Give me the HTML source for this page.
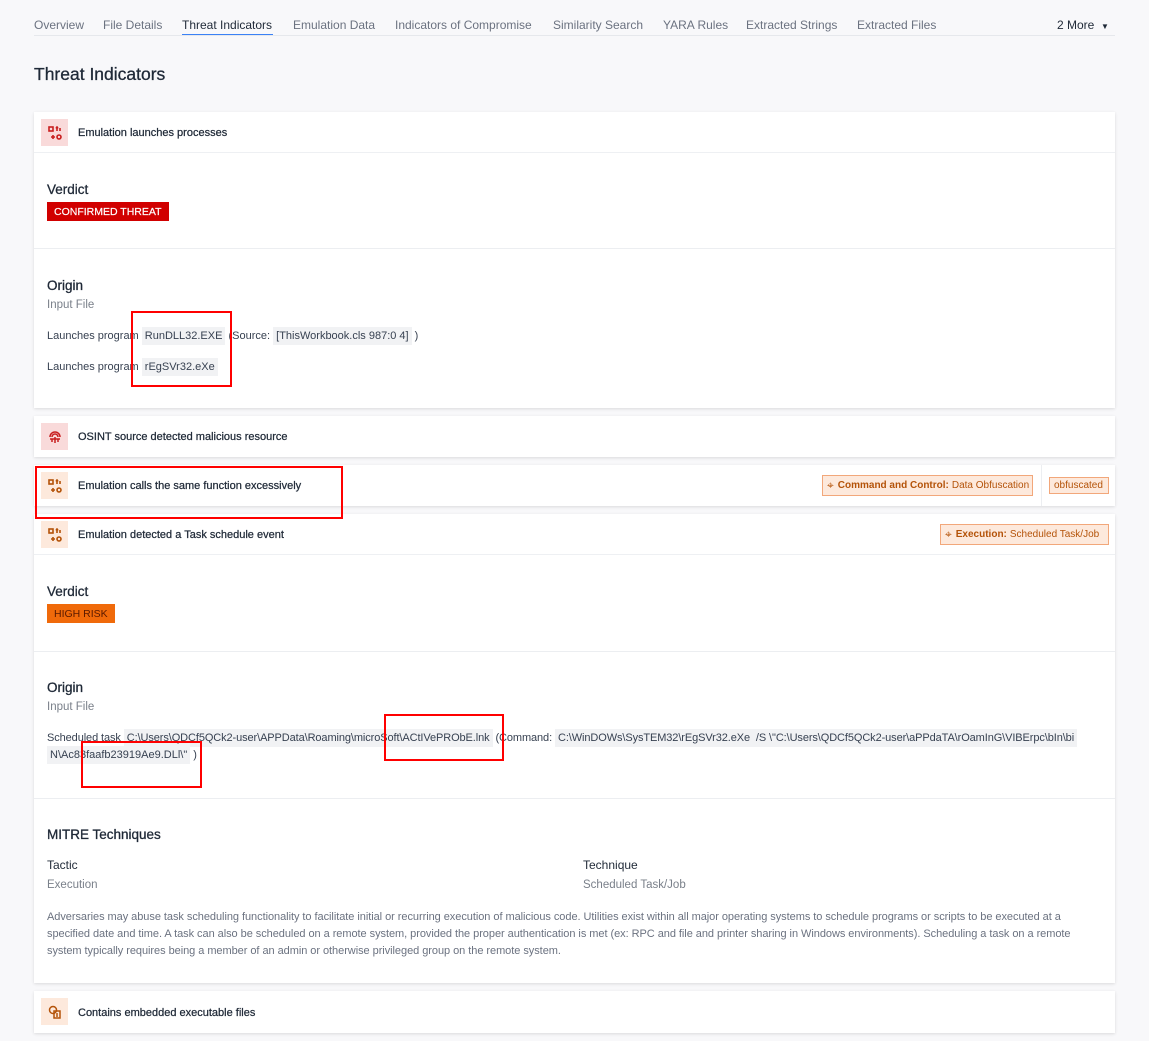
<!DOCTYPE html>
<html><head><meta charset="utf-8">
<style>
*{box-sizing:border-box;margin:0;padding:0}
body{width:1149px;height:1041px;background:#f8f8fa;font-family:"Liberation Sans",sans-serif;color:#2a3140;position:relative;overflow:hidden}
.a{position:absolute;white-space:nowrap}
.tab{font-size:12px;color:#6b7280;top:18px}
.card{position:absolute;left:34px;width:1081px;background:#fff;box-shadow:0 1px 3px rgba(0,0,0,.12)}
.hd{position:absolute;left:0;right:0;top:0;height:41px;border-bottom:1px solid #eef0f3}
.ic{position:absolute;left:7px;top:7px;width:27px;height:27px;display:flex;align-items:center;justify-content:center}
.ht{position:absolute;left:44px;top:15px;font-size:11px;color:#1f2937;white-space:nowrap;-webkit-text-stroke:.25px #1f2937}
.h{font-size:13.5px;color:#1f2937;position:absolute;white-space:nowrap;-webkit-text-stroke:.3px #1f2937}
.s{font-size:11.5px;color:#7a808a;position:absolute;white-space:nowrap}
.t{font-size:11px;color:#374151;position:absolute;white-space:nowrap}
.c{background:#f1f2f4;padding:3px 3px}
.div{position:absolute;left:0;right:0;height:1px;background:#eceef1}
.rb{position:absolute;border:2px solid #f00}
.tag{position:absolute;height:21px;border:1px solid #f2a77a;background:#fde9dc;color:#b45309;font-size:10px;display:flex;align-items:center;padding:0 4px;white-space:nowrap}
</style></head><body>
<div class="a tab" style="left:34px">Overview</div>
<div class="a tab" style="left:103px">File Details</div>
<div class="a tab" style="left:182px;color:#1f2937">Threat Indicators</div>
<div class="a" style="left:182px;top:34px;width:91px;height:2px;background:#3b82f6"></div>
<div class="a tab" style="left:293px">Emulation Data</div>
<div class="a tab" style="left:395px">Indicators of Compromise</div>
<div class="a tab" style="left:553px">Similarity Search</div>
<div class="a tab" style="left:663px">YARA Rules</div>
<div class="a tab" style="left:746px">Extracted Strings</div>
<div class="a tab" style="left:857px">Extracted Files</div>
<div class="a tab" style="left:1057px;color:#1f2937">2 More &nbsp;<span style="font-size:8px">▼</span></div>
<div class="a" style="left:34px;top:35px;width:1081px;height:1px;background:#e6e8ec"></div>
<div class="a" style="left:34px;top:64px;font-size:17.5px;color:#1f2937;-webkit-text-stroke:.3px #1f2937">Threat Indicators</div>

<!-- card1 -->
<div class="card" style="top:112px;height:296px">
 <div class="hd"><div class="ic" style="background:#f9dada"><svg width="14" height="14" viewBox="0 0 14 14" fill="none" stroke="#c81e1e" stroke-width="1.6"><rect x="1" y="1" width="4" height="4"/><path d="M9 1v4M8 2.5l1-1.5 1 1.5M12 2v3M5 9v4M3 11h4"/><circle cx="11" cy="11" r="2"/></svg></div><div class="ht">Emulation launches processes</div></div>
 <div class="h" style="left:13px;top:70px">Verdict</div>
 <div class="a" style="left:13px;top:90px;height:19px;background:#d10000;color:#fff;font-size:10.5px;padding:4px 7px 0 7px;-webkit-text-stroke:.2px #fff">CONFIRMED THREAT</div>
 <div class="div" style="top:136px"></div>
 <div class="h" style="left:13px;top:166px">Origin</div>
 <div class="s" style="left:13px;top:187px">Input File</div>
 <div class="t" style="left:13px;top:218px">Launches program <span class="c">RunDLL32.EXE</span> (Source: <span class="c">[ThisWorkbook.cls 987:0 4]</span> )</div>
 <div class="t" style="left:13px;top:249px">Launches program <span class="c">rEgSVr32.eXe</span></div>
</div>

<!-- card2 -->
<div class="card" style="top:416px;height:41px">
 <div class="hd" style="border:none"><div class="ic" style="background:#f9dada"><svg width="14" height="14" viewBox="0 0 14 14" fill="none" stroke="#c81e1e" stroke-width="1.5"><path d="M2 7a5 5 0 0 1 10 0M4 7a3 3 0 0 1 6 0M7 7v6M4 9v3M10 9v3M2 9h10"/></svg></div><div class="ht">OSINT source detected malicious resource</div></div>
</div>

<!-- card3 -->
<div class="card" style="top:465px;height:41px">
 <div class="hd" style="border:none"><div class="ic" style="background:#fde9dc"><svg width="14" height="14" viewBox="0 0 14 14" fill="none" stroke="#b45309" stroke-width="1.6"><rect x="1" y="1" width="4" height="4"/><path d="M9 1v4M8 2.5l1-1.5 1 1.5M12 2v3M5 9v4M3 11h4"/><circle cx="11" cy="11" r="2"/></svg></div><div class="ht">Emulation calls the same function excessively</div></div>
 <div class="tag" style="left:788px;top:10px;width:211px"><span style="font-size:12px;margin-right:4px">⌖</span><b style="font-weight:bold;margin-right:3px">Command and Control:</b> Data Obfuscation</div>
 <div class="a" style="left:1007px;top:0;width:1px;height:41px;background:#eceef1"></div>
 <div class="tag" style="left:1015px;top:12px;height:17px;width:60px">obfuscated</div>
</div>

<!-- card4 -->
<div class="card" style="top:514px;height:469px">
 <div class="hd"><div class="ic" style="background:#fde9dc"><svg width="14" height="14" viewBox="0 0 14 14" fill="none" stroke="#b45309" stroke-width="1.6"><rect x="1" y="1" width="4" height="4"/><path d="M9 1v4M8 2.5l1-1.5 1 1.5M12 2v3M5 9v4M3 11h4"/><circle cx="11" cy="11" r="2"/></svg></div><div class="ht">Emulation detected a Task schedule event</div></div>
 <div class="tag" style="left:906px;top:10px;width:169px"><span style="font-size:12px;margin-right:4px">⌖</span><b style="margin-right:3px">Execution:</b> Scheduled Task/Job</div>
 <div class="h" style="left:13px;top:70px">Verdict</div>
 <div class="a" style="left:13px;top:90px;height:19px;background:#f06a0a;color:#5a1a00;font-size:10.5px;padding:4px 7px 0 7px">HIGH RISK</div>
 <div class="div" style="top:137px"></div>
 <div class="h" style="left:13px;top:166px">Origin</div>
 <div class="s" style="left:13px;top:187px">Input File</div>
 <div class="t" style="left:13px;top:218px;font-size:11px;letter-spacing:-.1px">Scheduled task <span class="c">C:\Users\QDCf5QCk2-user\APPData\Roaming\microSoft\ACtIVePRObE.lnk</span> (Command: <span class="c">C:\WinDOWs\SysTEM32\rEgSVr32.eXe &nbsp;/S \"C:\Users\QDCf5QCk2-user\aPPdaTA\rOamInG\VIBErpc\bIn\bi</span></div>
 <div class="t" style="left:13px;top:235px;font-size:11px"><span class="c">N\Ac83faafb23919Ae9.DLl\"</span> )</div>
 <div class="div" style="top:284px"></div>
 <div class="h" style="left:13px;top:313px">MITRE Techniques</div>
 <div class="t" style="left:13px;top:344px;font-size:12px;color:#1f2937">Tactic</div>
 <div class="s" style="left:13px;top:365px">Execution</div>
 <div class="t" style="left:549px;top:344px;font-size:12px;color:#1f2937">Technique</div>
 <div class="s" style="left:549px;top:365px">Scheduled Task/Job</div>
 <div class="t" style="left:13px;top:395px;font-size:11px;line-height:17px;color:#6b7280;letter-spacing:-.05px">Adversaries may abuse task scheduling functionality to facilitate initial or recurring execution of malicious code. Utilities exist within all major operating systems to schedule programs or scripts to be executed at a<br>specified date and time. A task can also be scheduled on a remote system, provided the proper authentication is met (ex: RPC and file and printer sharing in Windows environments). Scheduling a task on a remote<br>system typically requires being a member of an admin or otherwise privileged group on the remote system.</div>
</div>

<!-- card5 -->
<div class="card" style="top:991px;height:42px">
 <div class="hd" style="border:none"><div class="ic" style="background:#fde9dc"><svg width="14" height="14" viewBox="0 0 14 14" fill="none" stroke="#b45309" stroke-width="1.5"><circle cx="5" cy="5" r="3.5"/><rect x="6" y="6" width="6" height="7"/><path d="M8 9h2M8 11h2"/></svg></div><div class="ht" style="top:16px">Contains embedded executable files</div></div>
</div>

<div class="rb" style="left:131px;top:311px;width:101px;height:76px"></div>
<div class="rb" style="left:35px;top:466px;width:308px;height:53px"></div>
<div class="rb" style="left:384px;top:714px;width:120px;height:47px"></div>
<div class="rb" style="left:81px;top:741px;width:121px;height:47px"></div>
</body></html>
